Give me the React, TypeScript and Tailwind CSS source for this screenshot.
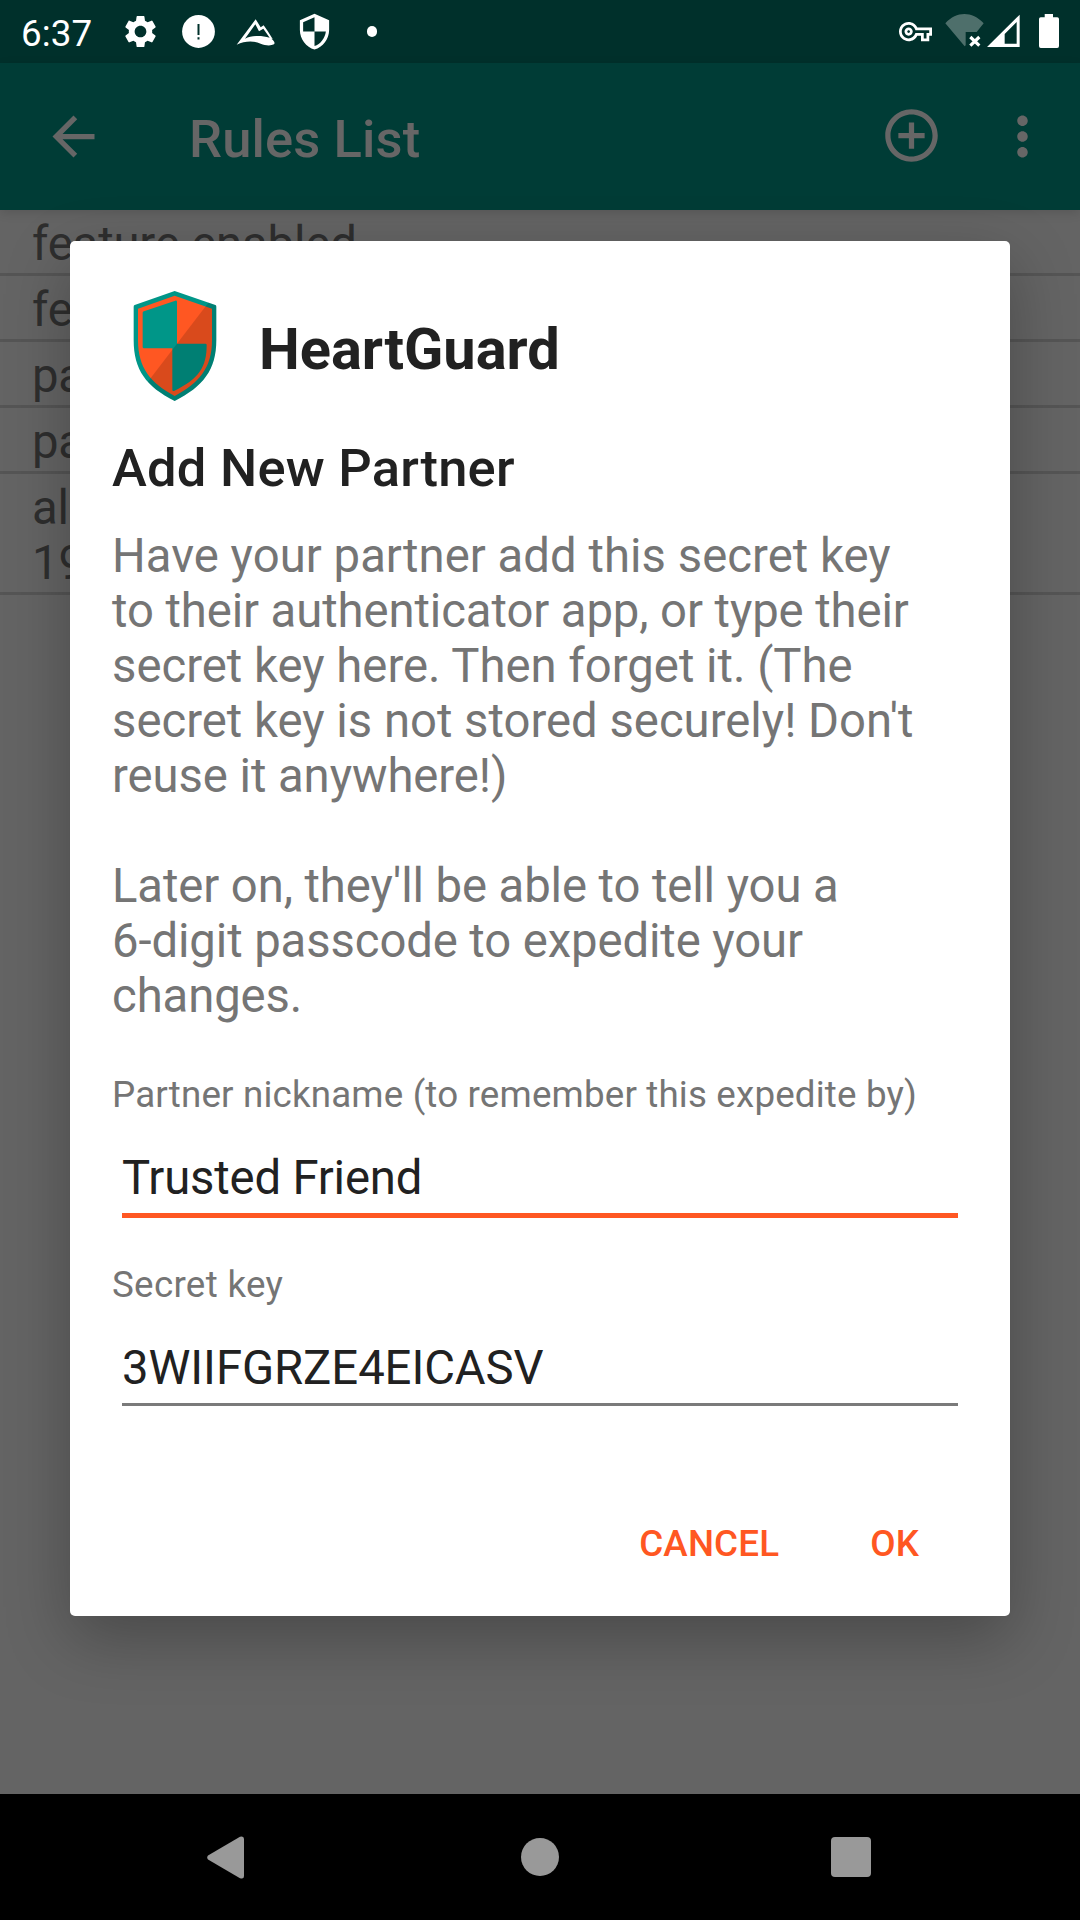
import React from "react";
import {
  MdAddCircleOutline,
  MdArrowBack,
  MdMoreVert,
  MdOutlineVpnKey,
  MdSecurity,
  MdSettings,
} from "react-icons/md";

function StatusBar() {
  return (
    <header className="flex h-[63px] shrink-0 justify-between bg-[#00302b] pl-[21px] pr-[21px] text-white">
      <div className="flex items-center">
        <span className="w-[90px] pt-[3px] text-[36.75px] leading-[43px] tracking-[0.1px]">6:37</span>
        <div className="flex items-center">
          <div className="flex w-[58px] justify-center">
            <MdSettings className="size-[39px]" />
          </div>
          <div className="flex w-[58px] justify-center">
            <svg className="size-[33px]" viewBox="0 0 33 33">
              <circle cx="16.5" cy="16.5" r="16.4" fill="#fff" />
              <path d="M15.5 9h2v11h-2zM15.5 22.3h2v2.2h-2z" fill="#00302b" />
            </svg>
          </div>
          <div className="flex w-[58px] justify-center">
            <svg className="h-[28px] w-[40px]" viewBox="18 22 120 84">
              <path
                fill="#fff"
                fillRule="evenodd"
                d="M20 102 L77 26 L92 50 L101 44 L113 61 L128 85 L124 84 C132 90 136 96 132 101 C122 106 106 105 92 99 C70 89 44 91 20 102Z M45 84 C66 74 94 74 119 81 L100 54 L87 62 L76 41Z"
              />
            </svg>
          </div>
          <div className="flex w-[58px] justify-center">
            <MdSecurity className="size-[39px]" />
          </div>
          <div className="flex w-[58px] justify-center">
            <span className="size-[10.6px] rounded-full bg-white" />
          </div>
        </div>
      </div>
      <div className="flex items-start">
        <MdOutlineVpnKey className="mt-[15px] size-[33px]" />
        <svg className="ml-[13px] mt-[14px] h-[34px] w-[39px]" viewBox="0 0 117 102">
          <path
            d="M59 97 L1 28 C35 -9 81 -9 116 28 L95 54 H62 V94Z"
            fill="#4e6f6b"
          />
          <path d="M76 69 L103 95 M103 69 L76 95" stroke="#fff" strokeWidth="9.5" />
        </svg>
        <svg className="ml-[3px] mt-[14px] h-[33px] w-[33px]" viewBox="0 0 99 99">
          <path
            fill="#fff"
            fillRule="evenodd"
            d="M0 99 L98 2 V99Z M53 60 V89 H89 V24Z"
          />
        </svg>
        <svg className="ml-[19px] mt-[14px] h-[34px] w-[20px]" viewBox="0 0 20 34">
          <path
            fill="#fff"
            d="M5.7 0h8.3v3.3h4.2q1.8 0 1.8 1.8v27q0 1.9-1.8 1.9h-16.4q-1.8 0-1.8-1.9v-27q0-1.8 1.8-1.8h3.9z"
          />
        </svg>
      </div>
    </header>
  );
}

function AppBar() {
  return (
    <div className="flex h-[147px] shrink-0 items-center bg-[#003c36] pl-[42px] text-[#666666] shadow-[0_3px_10px_rgba(0,0,0,0.12)]">
      <MdArrowBack className="size-[63px]" />
      <h1 className="ml-[84px] w-[691px] pt-[4px] text-[52.5px] font-medium leading-[62px] tracking-[0.12px]">
        Rules List
      </h1>
      <MdAddCircleOutline className="mb-[2px] size-[63px]" />
      <MdMoreVert className="ml-[48px] size-[63px]" />
    </div>
  );
}

const rules = [["feature enabled"], ["fe"], ["pa"], ["pa"], ["al", "19"]];

function RulesList() {
  return (
    <ul>
      {rules.map((lines, i) => (
        <li
          key={i}
          className="border-b-[3px] border-[#555555] pb-px pl-[32px] pt-[7px] text-[47.25px] leading-[55px] tracking-[-0.16px] text-[#2e2e2e]"
        >
          {lines.map((line) => (
            <div key={line}>{line}</div>
          ))}
        </li>
      ))}
    </ul>
  );
}

function ShieldLogo() {
  const outer =
    "M525 273 L647 315 Q650 316 650 320 V420 C650 510 610 560 525 603 C440 560 402 510 402 420 V320 Q402 316 405 315Z";
  return (
    <svg className="h-[112px] w-[84px]" viewBox="400 270 252 336">
      <defs>
        <clipPath id="shield">
          <path d={outer} />
        </clipPath>
      </defs>
      <path d={outer} fill="#009688" />
      <path
        fill="#ff5722"
        d="M525 287 L637 326 V420 C637 505 597 549 525 588 C453 549 415 505 415 420 V326Z"
      />
      <path
        fill="#009688"
        d="M433 334 L527 302 Q532 301 532 306 V431 H617 Q621 431 621 435 C621 500 599 536 523 573 Q518 574 518 569 V445 H433 Q429 445 429 441 V338 Q429 335 433 334Z"
      />
      <path
        d="M634 298 L440 551 L525 620 L670 620 V298Z"
        fill="#000"
        fillOpacity="0.15"
        clipPath="url(#shield)"
      />
    </svg>
  );
}

function PartnerDialog() {
  return (
    <section className="absolute left-[70px] top-[241px] flex h-[1375px] w-[940px] flex-col rounded-[5px] bg-white px-[42px] shadow-[0_22px_64px_rgba(0,0,0,0.27)]">
      <div className="flex pl-[21px] pt-[49px]">
        <ShieldLogo />
        <h2 className="ml-[42px] mt-[25px] text-[57.75px] font-bold leading-[68px] text-[#212121]">
          HeartGuard
        </h2>
      </div>
      <h3 className="mt-[35px] text-[52.5px] font-medium leading-[62px] tracking-[0.24px] text-[#212121]">
        Add New Partner
      </h3>
      <p className="mt-[30px] whitespace-nowrap text-[47.25px] leading-[55px] text-[#757575]">
        <span className="tracking-[0.04px]">Have your partner add this secret key</span>
        <br />
        <span className="tracking-[-0.09px]">to their authenticator app, or type their</span>
        <br />
        secret key here. Then forget it. (The
        <br />
        secret key is not stored securely! Don't
        <br />
        <span className="tracking-[-0.06px]">reuse it anywhere!)</span>
        <br />
        <br />
        <span className="tracking-[-0.1px]">Later on, they'll be able to tell you a</span>
        <br />
        <span className="tracking-[-0.1px]">6-digit passcode to expedite your</span>
        <br />
        <span className="tracking-[-0.1px]">changes.</span>
      </p>
      <label className="mt-[49px] whitespace-nowrap text-[36.75px] leading-[43px] tracking-[0.16px] text-[#757575]">
        Partner nickname (to remember this expedite by)
      </label>
      <div className="ml-[10px] mt-[35px] h-[67px] w-[836px] border-b-[5px] border-[#ff5722] text-[47.25px] leading-[55px] tracking-[-0.17px] text-[#212121]">
        Trusted Friend
      </div>
      <label className="mt-[45px] text-[36.75px] leading-[43px] tracking-[0.3px] text-[#757575]">
        Secret key
      </label>
      <div className="ml-[10px] mt-[35px] h-[65px] w-[836px] border-b-[3px] border-[#7a7a7a] text-[47.25px] leading-[55px] tracking-[-0.07px] text-[#212121]">
        3WIIFGRZE4EICASV
      </div>
      <div className="mt-[116px] flex justify-end gap-[91px] pr-[49px] text-[36.75px] font-medium leading-[43px] tracking-[0.15px] text-[#ff5722]">
        <button>CANCEL</button>
        <button>OK</button>
      </div>
    </section>
  );
}

function NavBar() {
  return (
    <nav className="grid h-[126px] shrink-0 grid-cols-[1fr_38px_1fr] items-center bg-black pl-[207px] pr-[209px]">
      <svg className="h-[43px] w-[37px]" viewBox="0 0 37 43">
        <path
          d="M1 19.5 L33 0.8 Q37 -0.5 37 3 V40 Q37 43.5 33 42.2 L1 23.5 Q-0.6 21.5 1 19.5Z"
          fill="#999"
        />
      </svg>
      <span className="ml-px size-[38px] rounded-full bg-[#999]" />
      <span className="size-[40px] justify-self-end rounded-[4px] bg-[#999]" />
    </nav>
  );
}

export default function App() {
  return (
    <div className="relative flex h-[1920px] w-[1080px] flex-col overflow-hidden bg-[#646464] font-[Roboto,sans-serif]">
      <StatusBar />
      <AppBar />
      <main className="flex-1">
        <RulesList />
      </main>
      <NavBar />
      <PartnerDialog />
    </div>
  );
}
